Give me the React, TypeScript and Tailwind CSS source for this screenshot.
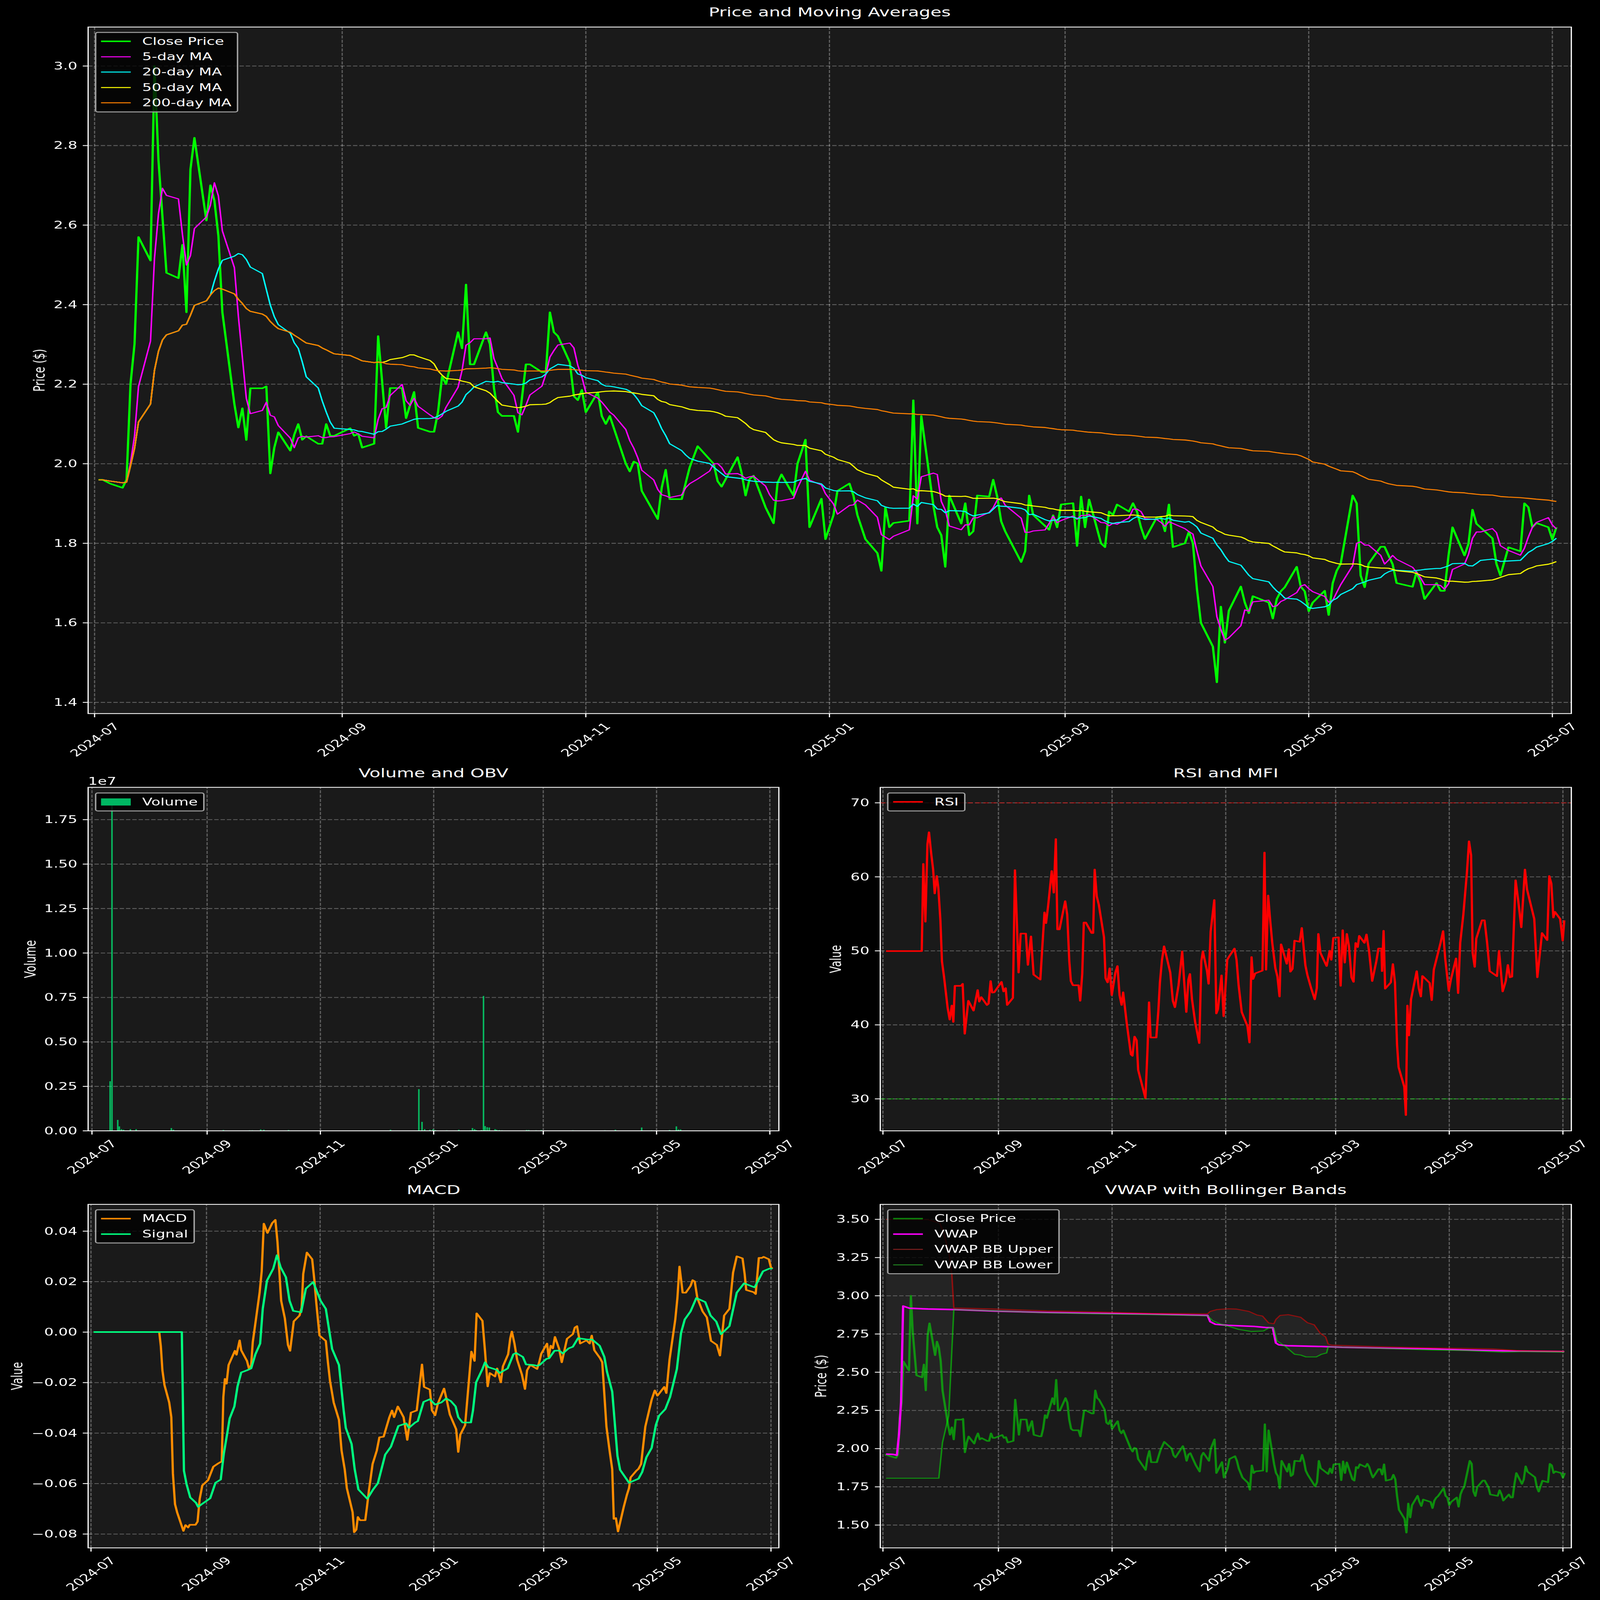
type Pt = [number, number];

// reads from the picture, scaled back to page pixels
const crop = (x0: number, y0: number, w: number, h: number, raw: Pt[]): Pt[] =>
  raw.map(([x, y]) => [x0 + (x * w) / 1568, y0 + (y * h) / 1568]);

const poly = (p: Pt[]) => p.map(([x, y]) => `${x.toFixed(1)},${y.toFixed(1)}`).join(" ");

const rawClose: Pt[] = [
  ...crop(250, 280, 800, 1500, [[49,1747],[71,1747],[115,1764],[180,1781],[202,1747],[222,1340],[247,1170],[267,715],[332,815],[352,-12],[375,390],[398,630],[420,867],[486,890],[507,748],[528,1035],[551,427],[573,293],[639,645],[660,495],[683,560],[705,710],[727,1035],[792,1425],[814,1525],[835,1443],[857,1578],[878,1358],[945,1358],[967,1350],[985,1720],[1010,1610],[1032,1545],[1098,1623],[1120,1555],[1142,1510],[1163,1577],[1185,1562],[1250,1594],[1272,1594],[1294,1510],[1316,1560],[1338,1560],[1425,1528],[1447,1560]]),
  ...crop(1000, 1050, 800, 1000, [[0,1120],[22,1208],[87,1183],[108,497],[152,1082],[174,828],[240,828],[262,1020],[305,853],[327,1082],[392,1107],[414,1107],[436,980],[458,755],[480,803],[546,472],[567,575],[589,168],[611,677],[633,677],[698,472],[720,550],[742,828],[764,982],[786,1006],[852,1006],[873,1108],[916,677],[940,677],[1004,727],[1026,727],[1048,345],[1070,472],[1092,497],[1158,665],[1180,880],[1202,905],[1224,840],[1246,982],[1311,855],[1333,1007],[1355,1057],[1378,1006],[1465,1310],[1487,1360],[1508,1297],[1530,1310]]),
  ...crop(1750, 1400, 800, 1000, [[80,935],[169,1115],[190,915],[213,800],[234,988],[300,988],[322,885],[344,785],[388,650],[475,762],[497,873],[519,908],[606,720],[628,820],[650,965],[672,860],[693,838],[716,925],[760,1040],[803,1142],[824,885],[847,830],[912,965],[934,762],[955,675],[977,608],[999,1167],[1064,985],[1086,1243],[1130,1090],[1152,935],[1218,888],[1240,965],[1262,1090],[1306,1243],[1371,1332],[1393,1445],[1415,1040],[1437,1167],[1459,1140]]),
  ...crop(2500, 1500, 1000, 1400, [[60,692],[78,143],[96,705],[113,215],[165,620],[183,722],[200,758],[218,902],[235,577],[288,705],[305,612],[323,758],[341,740],[358,577],[410,582],[428,505],[445,582],[463,695],[480,740],[550,880],[568,830],[585,577],[602,665],[672,733],[690,667],[707,722],[725,618],[777,612],[795,807],[812,582],[830,722],[847,595],[865,670],[882,722],[900,795],[917,812],[934,650],[952,665],[969,618],[1021,650],[1039,612],[1056,650],[1074,722],[1091,775],[1143,675],[1161,675],[1178,740],[1196,618],[1213,812],[1266,795],[1283,742],[1300,795],[1318,1000],[1336,1157],[1388,1265],[1406,1428],[1423,1083],[1441,1248]]),
  ...crop(3400, 1800, 1066, 1500, [[44,715],[94,612],[110,680],[127,725],[143,653],[207,680],[225,748],[241,665],[257,632],[273,615],[323,528],[340,612],[356,632],[373,717],[389,680],[438,630],[454,733],[470,598],[487,545],[503,515],[552,225],[569,258],[585,565],[602,615],[618,515],[667,443],[683,443],[716,517],[733,597],[799,613],[815,550],[832,595],[848,665],[897,597],[914,630],[930,630],[946,480],[962,360],[1013,480],[1029,430],[1045,285],[1061,345],[1127,407],[1143,515],[1160,565],[1192,445],[1241,462],[1257,258],[1274,275],[1290,360],[1307,342],[1357,360],[1373,412],[1390,360]]),
];

const TOP_X0 = 264;
const TOP_K = 11.148;

// close as [day since 2024-07-01, page y]
const closeByDay: Pt[] = [[1, 1951], ...rawClose.map(([x, y]): Pt => [Math.round((x - TOP_X0) / TOP_K), y])];
const holidays = [3, 63, 150, 177, 184, 192, 203, 231, 291, 329, 353];
const tradingDays: number[] = [];
for (let d = 1; d <= 366; d++) {
  if (d % 7 < 5 && !holidays.includes(d)) tradingDays.push(d);
}

function yAt(day: number) {
  for (let i = 1; i < closeByDay.length; i++) {
    const [d0, y0] = closeByDay[i - 1];
    const [d1, y1] = closeByDay[i];
    if (day === d1) return y1;
    if (day > d0 && day < d1) return y0 + ((y1 - y0) * (day - d0)) / (d1 - d0);
  }
  return closeByDay[closeByDay.length - 1][1];
}

const closeY = tradingDays.map(yAt);
const movingAvg = (n: number): Pt[] =>
  tradingDays.map((d, i) => {
    const w = closeY.slice(Math.max(0, i - n + 1), i + 1);
    return [TOP_X0 + TOP_K * d, w.reduce((a, b) => a + b, 0) / w.length];
  });
const closeTop: Pt[] = tradingDays.map((d, i) => [TOP_X0 + TOP_K * d, closeY[i]]);
const closeVwap: Pt[] = tradingDays.map((d, i) => {
  const price = 3 - (closeY[i] - 268.5) / 1617.5;
  return [2464.5 + 5.2 * d, 4959 + (3.5 - price) * 621.6];
});

const rsi = crop(2200, 3100, 2266, 1800, [[189,669],[258,669],[261,360],[265,565],[269,290],[272,248],[276,320],[280,380],[283,465],[287,403],[290,445],[294,560],[297,705],[301,760],[308,870],[312,912],[316,862],[319,920],[322,792],[334,792],[337,785],[341,962],[348,845],[358,880],[366,807],[369,848],[373,832],[384,860],[387,855],[391,775],[394,816],[398,815],[412,778],[416,812],[420,800],[423,860],[434,835],[438,382],[441,530],[445,745],[449,607],[459,607],[463,718],[469,617],[474,752],[487,770],[491,650],[495,532],[498,570],[502,510],[509,385],[513,462],[517,272],[520,592],[524,592],[535,492],[539,540],[543,705],[546,775],[550,790],[561,790],[564,845],[568,750],[571,568],[575,568],[586,605],[589,605],[592,380],[596,475],[600,505],[610,620],[613,765],[617,780],[621,730],[625,825],[632,745],[636,722],[640,825],[644,860],[647,815],[654,925],[662,1035],[665,1040],[669,972],[673,985],[676,1090],[690,1190],[694,1020],[697,850],[700,975],[711,975],[715,880],[718,780],[722,700],[726,652],[738,745],[743,845],[747,868],[754,790],[761,670],[765,780],[769,885],[773,770],[776,750],[780,840],[786,920],[794,995],[798,705],[801,670],[809,740],[812,785],[816,600],[823,488],[827,890],[830,875],[837,755],[841,900],[848,700],[851,690],[862,660],[866,700],[870,790],[876,885],[887,935],[891,993],[895,690],[898,768],[902,748],[916,738],[920,320],[923,735],[927,472],[931,560],[935,640],[941,730],[945,760],[949,830],[952,645],[960,695],[963,714],[967,662],[970,742],[974,732],[978,632],[988,636],[992,587],[999,720],[1003,755],[1010,800],[1017,840],[1021,800],[1024,608],[1028,675],[1040,722],[1046,668],[1049,700],[1053,622],[1063,620],[1067,792],[1071,595],[1075,710],[1079,608],[1083,650],[1088,762],[1092,778],[1096,640],[1100,655],[1103,615],[1113,640],[1117,610],[1122,670],[1128,775],[1136,705],[1140,660],[1146,660],[1147,740],[1150,597],[1153,802],[1164,780],[1168,715],[1172,780],[1176,1000],[1179,1080],[1190,1150],[1193,1250],[1196,862],[1199,968],[1203,840],[1214,740],[1218,800],[1222,830],[1225,757],[1239,782],[1243,843],[1247,735],[1260,640],[1265,598],[1269,695],[1276,810],[1280,770],[1290,695],[1294,818],[1298,640],[1304,540],[1311,390],[1315,280],[1319,330],[1322,675],[1326,725],[1329,625],[1340,560],[1345,560],[1350,640],[1355,740],[1369,758],[1373,668],[1380,812],[1386,775],[1390,718],[1394,762],[1398,760],[1405,418],[1410,490],[1416,585],[1423,380],[1427,450],[1441,555],[1447,762],[1456,605],[1466,630],[1470,403],[1474,430],[1478,550],[1481,530],[1491,555],[1496,632],[1499,560]]);

const macd = crop(0, 4800, 2300, 1707, [[178,567],[303,567],[306,620],[309,710],[313,765],[322,830],[326,885],[329,1095],[333,1210],[337,1240],[343,1275],[349,1310],[353,1288],[358,1297],[361,1287],[372,1287],[376,1275],[380,1190],[385,1140],[396,1120],[400,1100],[406,1070],[415,1058],[422,1050],[425,810],[428,742],[431,760],[435,690],[447,637],[450,652],[456,598],[459,635],[470,675],[474,705],[478,690],[481,605],[487,520],[494,420],[498,340],[502,162],[509,197],[518,160],[524,148],[528,230],[535,450],[542,515],[548,615],[552,637],[559,527],[570,505],[574,475],[577,350],[584,270],[594,295],[598,370],[602,460],[608,580],[620,600],[624,680],[628,750],[635,830],[645,895],[650,1010],[656,1080],[660,1150],[671,1240],[674,1315],[678,1305],[681,1258],[685,1270],[695,1270],[698,1225],[702,1160],[709,1060],[717,1010],[722,960],[730,958],[741,885],[746,860],[750,885],[757,845],[768,885],[775,970],[782,868],[793,860],[803,688],[807,772],[818,782],[822,860],[828,878],[833,835],[845,778],[850,820],[856,875],[868,930],[872,1015],[876,950],[885,915],[897,640],[903,675],[907,497],[918,525],[923,640],[928,770],[932,720],[942,733],[946,703],[953,755],[957,695],[967,650],[971,590],[974,565],[979,610],[984,670],[993,725],[999,780],[1003,710],[1009,690],[1022,705],[1026,680],[1030,648],[1041,610],[1044,660],[1048,618],[1052,628],[1056,585],[1064,630],[1069,680],[1079,592],[1090,575],[1094,550],[1098,545],[1104,610],[1116,598],[1122,610],[1126,580],[1131,635],[1142,665],[1146,680],[1150,800],[1154,920],[1160,1010],[1165,1080],[1168,1265],[1172,1262],[1176,1312],[1187,1220],[1193,1175],[1197,1150],[1200,1110],[1211,1085],[1215,1078],[1220,1060],[1228,920],[1240,820],[1246,785],[1251,805],[1255,795],[1264,772],[1268,795],[1274,670],[1285,520],[1289,440],[1293,322],[1299,420],[1305,420],[1314,395],[1318,373],[1322,378],[1327,440],[1337,490],[1345,512],[1353,600],[1364,615],[1370,655],[1378,505],[1388,480],[1395,345],[1402,284],[1413,292],[1417,350],[1420,410],[1434,418],[1438,425],[1444,290],[1450,290],[1453,286],[1463,295],[1467,325],[1470,330]]);

const signal = crop(0, 4800, 2300, 1707, [[178,567],[346,567],[350,1085],[355,1135],[362,1185],[373,1205],[377,1220],[384,1210],[400,1188],[410,1130],[420,1118],[426,1020],[432,950],[437,890],[446,845],[452,770],[459,718],[470,710],[478,703],[486,650],[495,610],[500,480],[508,375],[520,330],[527,280],[534,325],[544,362],[551,450],[558,488],[573,493],[582,405],[596,380],[610,450],[620,480],[632,630],[645,690],[654,860],[658,925],[669,985],[675,1080],[682,1155],[699,1190],[710,1155],[719,1132],[733,1025],[744,995],[758,918],[773,908],[778,925],[790,905],[795,900],[806,828],[818,818],[828,838],[840,830],[849,815],[858,825],[867,845],[872,885],[880,905],[896,905],[900,860],[906,755],[918,705],[923,680],[929,698],[945,708],[951,720],[966,703],[977,650],[982,645],[995,660],[1001,688],[1015,690],[1022,693],[1027,690],[1040,667],[1045,665],[1055,637],[1064,636],[1071,647],[1082,628],[1090,622],[1100,590],[1118,595],[1127,595],[1141,618],[1150,660],[1155,715],[1165,790],[1175,1030],[1180,1082],[1197,1130],[1215,1115],[1222,1090],[1230,1035],[1240,1000],[1248,915],[1254,880],[1266,855],[1275,810],[1288,705],[1296,570],[1303,520],[1314,490],[1325,440],[1342,455],[1352,505],[1363,528],[1372,575],[1388,545],[1402,420],[1416,385],[1436,400],[1452,340],[1464,330],[1470,330]]);

const vwap = crop(2200, 4800, 2266, 1707, [[189,1023],[202,1024],[210,1027],[214,950],[218,830],[222,470],[234,478],[270,481],[320,483],[400,489],[500,494],[600,497],[700,500],[810,505],[815,528],[825,538],[850,542],[900,546],[922,550],[936,551],[942,608],[948,615],[965,618],[1030,621],[1070,624],[1150,627],[1240,630],[1310,634],[1400,638],[1499,640]]);
const bbUpper = crop(2200, 4800, 2266, 1707, [[189,146],[270,147],[293,160],[300,195],[310,265],[316,350],[320,477],[400,481],[500,488],[600,492],[700,497],[810,499],[815,490],[828,483],[850,480],[865,481],[890,490],[905,503],[916,507],[928,533],[938,536],[942,520],[950,505],[966,502],[990,512],[1003,532],[1016,540],[1028,572],[1038,585],[1043,612],[1050,616],[1150,622],[1240,626],[1310,628],[1360,630],[1410,636],[1499,639]]);
const bbLower = crop(2200, 4800, 2266, 1707, [[189,1113],[291,1113],[298,980],[310,880],[316,640],[320,483],[400,488],[500,495],[600,499],[700,502],[810,506],[820,525],[835,537],[850,545],[870,557],[895,565],[918,563],[930,550],[938,553],[944,600],[960,620],[978,650],[990,653],[1000,660],[1020,660],[1030,650],[1040,645],[1043,622],[1150,628],[1240,634],[1310,636],[1380,642],[1420,640],[1499,642]]);

const volumeBars = crop(0, 3100, 2300, 1800, [[205,1304],[209.5,1130],[213,148],[224,1267],[227,1290],[231,1300],[235,1302],[248,1300],[259,1300],[326,1296],[330,1302],[425,1303],[475,1304],[480,1304],[496,1301],[502,1302],[549,1303],[743,1302],[797,1158],[803,1274],[808,1300],[818,1302],[824,1300],[828,1303],[850,1304],[873,1302],[895,1304],[899,1296],[903,1300],[906,1303],[916,1303],[920,828],[923,1289],[927,1293],[931,1294],[942,1300],[945,1302],[950,1303],[955,1304],[1002,1303],[1006,1303],[1020,1304],[1030,1303],[1090,1304],[1151,1304],[1171,1302],[1221,1294],[1240,1304],[1274,1303],[1287,1290],[1291,1301],[1295,1301],[1395,1305]]);

const MONTHS = ["2024-07", "2024-09", "2024-11", "2025-01", "2025-03", "2025-05", "2025-07"];
const MONTH_DAYS = [0, 62, 123, 184, 243, 304, 365];

type Line = { points: Pt[]; color: string; width: number; opacity?: number };
type AxesProps = {
  view: [number, number, number, number];
  box: [number, number, number, number];
  xStart: number;
  xStep: number;
  yTicks: [string, number][];
  yLabel: string;
  yLabelX: number;
  lines?: Line[];
  children?: React.ReactNode;
};

function Axes({ view, box, xStart, xStep, yTicks, yLabel, yLabelX, lines = [], children }: AxesProps) {
  const [l, t, r, b] = box;
  const mid = (t + b) / 2;
  return (
    <svg
      width={view[2]}
      height={view[3]}
      viewBox={view.join(" ")}
      className="block overflow-visible fill-white"
    >
      <rect x={l} y={t} width={r - l} height={b - t} fill="#1a1a1a" />
      <g stroke="#ffffff" strokeOpacity={0.3} strokeWidth={3.33} strokeDasharray="12.3 5.3">
        {MONTH_DAYS.map((d) => (
          <line key={d} x1={xStart + xStep * d} x2={xStart + xStep * d} y1={b} y2={t} />
        ))}
        {yTicks.map(([label, y]) => (
          <line key={label} x1={l} x2={r} y1={y} y2={y} />
        ))}
      </g>
      {children}
      {lines.map((line, i) => (
        <polyline
          key={i}
          points={poly(line.points)}
          fill="none"
          stroke={line.color}
          strokeWidth={line.width}
          strokeOpacity={line.opacity ?? 1}
          strokeLinejoin="round"
        />
      ))}
      <rect x={l} y={t} width={r - l} height={b - t} fill="none" stroke="#ffffff" strokeWidth={3.33} />
      <g stroke="#ffffff" strokeWidth={3.33}>
        {MONTH_DAYS.map((d) => (
          <line key={d} x1={xStart + xStep * d} x2={xStart + xStep * d} y1={b} y2={b + 15} />
        ))}
        {yTicks.map(([label, y]) => (
          <line key={label} x1={l - 15} x2={l} y1={y} y2={y} />
        ))}
      </g>
      {MONTHS.map((m, i) => {
        const x = xStart + xStep * MONTH_DAYS[i];
        return (
          <text
            key={m}
            x={x}
            y={b + 106}
            textAnchor="middle"
            dominantBaseline="central"
            transform={`rotate(-45 ${x} ${b + 106})`}
          >
            {m}
          </text>
        );
      })}
      {yTicks.map(([label, y]) => (
        <text key={label} x={l - 30} y={y} textAnchor="end" dominantBaseline="central">
          {label}
        </text>
      ))}
      <text
        x={yLabelX}
        y={mid}
        textAnchor="middle"
        dominantBaseline="central"
        transform={`rotate(-90 ${yLabelX} ${mid})`}
      >
        {yLabel}
      </text>
    </svg>
  );
}

type LegendItem = { label: string; color: string; thick?: boolean; patch?: boolean };

function Legend({ items, className }: { items: LegendItem[]; className: string }) {
  return (
    <div className={`absolute flex flex-col rounded-[8px] border-[4px] border-[#a3a3a3] bg-black/80 px-[13px] py-[3px] ${className}`}>
      {items.map((item) => (
        <div key={item.label} className="flex h-[62.5px] items-center gap-[32px] whitespace-nowrap pr-[2px]">
          <span
            className={`w-[83px] ${item.patch ? "h-[29px]" : item.thick ? "h-[6px]" : "h-[4px]"}`}
            style={{ backgroundColor: item.color }}
          />
          <span>{item.label}</span>
        </div>
      ))}
    </div>
  );
}

function Title({ children, className }: { children: string; className: string }) {
  return <h2 className={`flex h-[100px] items-center justify-center text-[50px] font-normal ${className}`}>{children}</h2>;
}

const topTicks: [string, number][] = ["3.0", "2.8", "2.6", "2.4", "2.2", "2.0", "1.8", "1.6", "1.4"].map((s, i) => [s, 268.5 + 323.5 * i]);
const volTicks: [string, number][] = ["0.00", "0.25", "0.50", "0.75", "1.00", "1.25", "1.50", "1.75"].map((s, i) => [s, 4599 - 180.8 * i]);
const rsiTicks: [string, number][] = ["70", "60", "50", "40", "30"].map((s, i) => [s, 3265 + 301 * i]);
const macdTicks: [string, number][] = ["0.04", "0.02", "0.00", "\u22120.02", "\u22120.04", "\u22120.06", "\u22120.08"].map((s, i) => [s, 5007 + 205.3 * i]);
const vwapTicks: [string, number][] = ["3.50", "3.25", "3.00", "2.75", "2.50", "2.25", "2.00", "1.75", "1.50"].map((s, i) => [s, 4959 + 155.4 * i]);

// the figure is 4466x6507; the browser may hand us a smaller window, so fit it to whatever we got
const fitX = window.innerWidth / 4466;
const fitY = window.innerHeight / 6507;

export default function App() {
  return (
    <div className="h-screen w-screen overflow-hidden bg-black">
      <div
        className="flex h-[6507px] w-[4466px] origin-top-left flex-col bg-black font-['DejaVu_Sans',sans-serif] text-[41.67px] leading-none text-white"
        style={{ transform: `scale(${fitX}, ${fitY})` }}
      >
        <section className="h-[3095px]">
          <Title className="ml-[246px] w-[4140px]">Price and Moving Averages</Title>
          <div className="relative">
            <Axes
              view={[0, 100, 4466, 2995]}
              box={[246, 110, 4386, 2902]}
              xStart={TOP_X0}
              xStep={TOP_K}
              yTicks={topTicks}
              yLabel="Price ($)"
              yLabelX={110}
              lines={[
                { points: closeTop, color: "#00ff00", width: 6.25 },
                { points: movingAvg(5), color: "#ff00ff", width: 4.17 },
                { points: movingAvg(20), color: "#00ffff", width: 4.17 },
                { points: movingAvg(50), color: "#ffff00", width: 4.17 },
                { points: movingAvg(200), color: "#ff8000", width: 4.17 },
              ]}
            />
            <Legend
              className="left-[265px] top-[30px]"
              items={[
                { label: "Close Price", color: "#00ff00", thick: true },
                { label: "5-day MA", color: "#ff00ff" },
                { label: "20-day MA", color: "#00ffff" },
                { label: "50-day MA", color: "#ffff00" },
                { label: "200-day MA", color: "#ff8000" },
              ]}
            />
          </div>
        </section>

        <section className="grid h-[1695px] grid-cols-2">
          <div>
            <Title className="ml-[246px] w-[1928px]">Volume and OBV</Title>
            <div className="relative">
              <Axes
                view={[0, 3195, 2233, 1595]}
                box={[246, 3202, 2174, 4599]}
                xStart={256.7}
                xStep={5.184}
                yTicks={volTicks}
                yLabel="Volume"
                yLabelX={85}
              >
                {volumeBars.map(([x, y]) => (
                  <rect key={x} x={x - 2} y={y} width={4.2} height={4599 - y} fill="#00ff7f" fillOpacity={0.7} />
                ))}
                <text x={246} y={3192}>1e7</text>
              </Axes>
              <Legend className="left-[265px] top-[28px]" items={[{ label: "Volume", color: "#00b863", patch: true }]} />
            </div>
          </div>
          <div>
            <Title className="ml-[224px] w-[1929px]">RSI and MFI</Title>
            <div className="relative">
              <Axes
                view={[2233, 3195, 2233, 1595]}
                box={[2457, 3202, 4386, 4599]}
                xStart={2464.5}
                xStep={5.2}
                yTicks={rsiTicks}
                yLabel="Value"
                yLabelX={2333}
                lines={[{ points: rsi, color: "#ff0000", width: 6.25 }]}
              >
                <line x1={2457} x2={4386} y1={3265} y2={3265} stroke="#ff0000" strokeOpacity={0.5} strokeWidth={4.17} strokeDasharray="15.4 6.7" />
                <line x1={2457} x2={4386} y1={4469} y2={4469} stroke="#00ff00" strokeOpacity={0.4} strokeWidth={4.17} strokeDasharray="15.4 6.7" />
              </Axes>
              <Legend className="left-[243px] top-[28px]" items={[{ label: "RSI", color: "#ff0000", thick: true }]} />
            </div>
          </div>
        </section>

        <section className="grid h-[1717px] grid-cols-2">
          <div>
            <Title className="ml-[246px] w-[1928px]">MACD</Title>
            <div className="relative">
              <Axes
                view={[0, 4890, 2233, 1617]}
                box={[246, 4898, 2174, 6295]}
                xStart={254}
                xStep={5.2}
                yTicks={macdTicks}
                yLabel="Value"
                yLabelX={48}
                lines={[
                  { points: macd, color: "#ff8c00", width: 6.25 },
                  { points: signal, color: "#00ff7f", width: 6.25 },
                ]}
              />
              <Legend
                className="left-[265px] top-[28px]"
                items={[
                  { label: "MACD", color: "#ff8c00", thick: true },
                  { label: "Signal", color: "#00ff7f", thick: true },
                ]}
              />
            </div>
          </div>
          <div>
            <Title className="ml-[224px] w-[1929px]">VWAP with Bollinger Bands</Title>
            <div className="relative">
              <Axes
                view={[2233, 4890, 2233, 1617]}
                box={[2457, 4898, 4386, 6295]}
                xStart={2464.5}
                xStep={5.2}
                yTicks={vwapTicks}
                yLabel="Price ($)"
                yLabelX={2292}
                lines={[
                  { points: closeVwap, color: "#00ff00", width: 6.25, opacity: 0.5 },
                  { points: vwap, color: "#ff00ff", width: 6.25 },
                  { points: bbUpper, color: "#ff0000", width: 4.17, opacity: 0.5 },
                  { points: bbLower, color: "#00ff00", width: 4.17, opacity: 0.5 },
                ]}
              >
                <polygon points={poly([...bbUpper, ...[...bbLower].reverse()])} fill="#808080" fillOpacity={0.1} />
              </Axes>
              <Legend
                className="left-[243px] top-[28px]"
                items={[
                  { label: "Close Price", color: "#0c800c", thick: true },
                  { label: "VWAP", color: "#ff00ff", thick: true },
                  { label: "VWAP BB Upper", color: "#802020" },
                  { label: "VWAP BB Lower", color: "#208020" },
                ]}
              />
            </div>
          </div>
        </section>
      </div>
    </div>
  );
}
